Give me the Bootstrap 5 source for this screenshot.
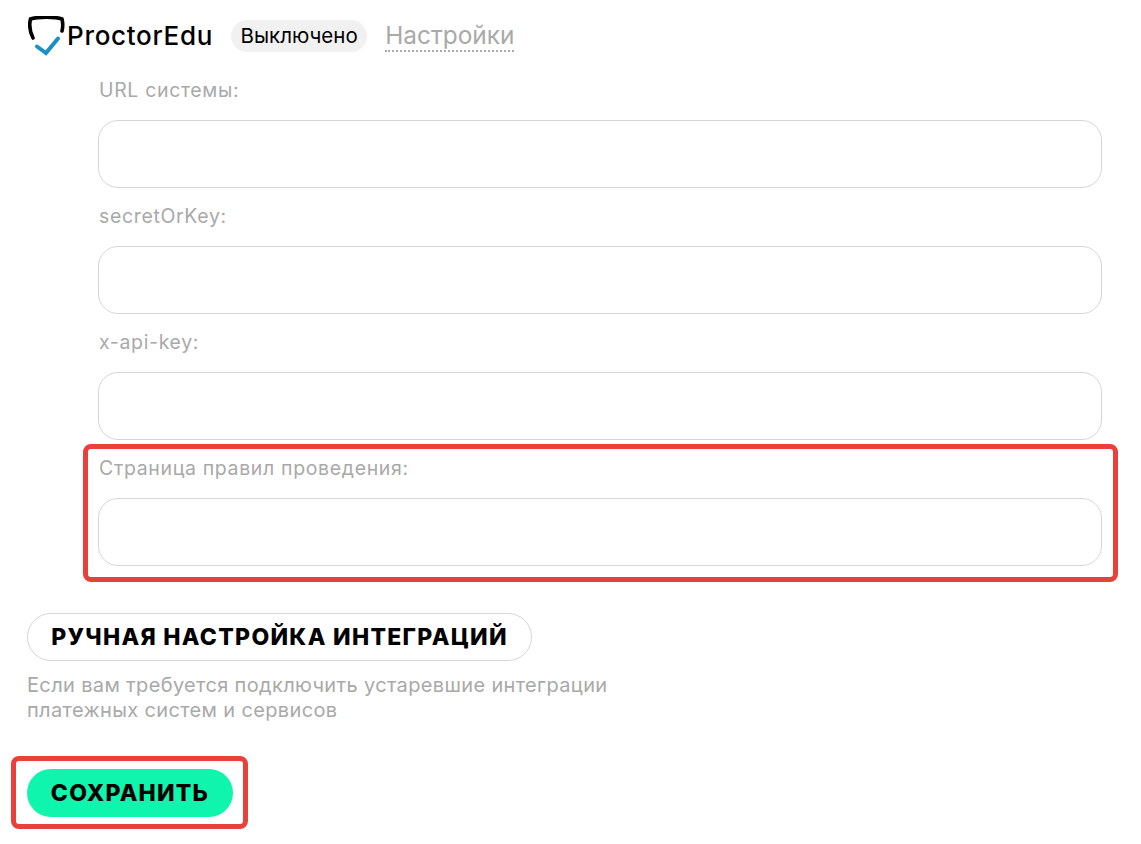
<!DOCTYPE html>
<html lang="ru">
<head>
<meta charset="utf-8">
<title>ProctorEdu</title>
<link href="https://cdn.jsdelivr.net/npm/bootstrap@5.3.0/dist/css/bootstrap.min.css" rel="stylesheet">
<style>
html,body{background:#fff;}
body{font-family:Inter,"Open Sans",sans-serif;color:#000;overflow:hidden;height:844px;}
.page-wrap{padding:19px 0 0 27px;width:1141px;position:relative;height:844px;}
.head-row{height:33px;}
.logo-mark{width:38px;height:40px;margin:0 1px 0 1px;flex:none;}
.logo-text{font-size:26px;font-weight:500;letter-spacing:.7px;line-height:1;}
.state-pill{background:#f1f1f1;border-radius:16px;font-size:20.5px;line-height:32px;height:32px;padding:0 9.5px;margin-left:18px;color:#000;}
.set-link{font-size:24.4px;color:#a9a9a9;line-height:30px;margin-left:18px;border-bottom:2px dotted #a9a9a9;text-decoration:none;display:block;}
.field-stack{margin:0 0 0 71px;width:1004px;padding-top:22px;}
.field-item{height:126px;}
.field-label{display:block;font-size:19.5px;letter-spacing:.65px;color:#a9a9a9;line-height:32px;height:32px;margin:0 0 14px 1px;}
.field-input.form-control{height:68px;border:1px solid #d6d6d6;border-radius:20px;box-shadow:none;background:#fff;}
.manual-btn.btn{margin-top:35px;height:48px;width:505px;border:1px solid #d6d6d6;border-radius:24px;background:#fff;color:#000;font-size:23px;font-weight:800;letter-spacing:1.3px;padding:0;line-height:46px;display:block;white-space:nowrap;}
.help-note{font-size:20px;letter-spacing:.35px;line-height:25px;color:#a9a9a9;margin:12px 0 0 0;width:620px;}
.save-btn.btn{margin-top:46px;width:206px;height:48px;border:0;border-radius:24px;background:#0ff5ae;color:#000;font-size:23px;font-weight:800;letter-spacing:1.2px;padding:0;display:block;}
.mark-box{position:absolute;border:5px solid #e8403a;border-radius:8px;pointer-events:none;}
.mark-a{left:83px;top:444px;width:1035px;height:138px;}
.mark-b{left:11px;top:756px;width:237px;height:73px;}
</style>
</head>
<body>
<div class="page-wrap">
  <div class="head-row d-flex align-items-center">
    <svg class="logo-mark" viewBox="28 15 38 40" fill="none" stroke-linecap="round" aria-hidden="true">
      <path d="M33 37C29.5 30 29 24 30.5 18C38 15.5 55 15.5 62 18C63 22 63 26 62 30" stroke="#000" stroke-width="3.6"/>
      <path d="M37 45.5L46 52L58 37.5" stroke="#1a8fc4" stroke-width="4"/>
    </svg>
    <span class="logo-text">ProctorEdu</span>
    <span class="state-pill">Выключено</span>
    <a class="set-link" href="#">Настройки</a>
  </div>
  <form>
    <div class="field-stack">
      <div class="field-item"><label class="field-label">URL системы:</label><input class="form-control field-input" type="text"></div>
      <div class="field-item"><label class="field-label">secretOrKey:</label><input class="form-control field-input" type="text"></div>
      <div class="field-item"><label class="field-label">x-api-key:</label><input class="form-control field-input" type="text"></div>
      <div class="field-item"><label class="field-label">Страница правил проведения:</label><input class="form-control field-input" type="text"></div>
    </div>
    <button type="button" class="btn manual-btn">РУЧНАЯ НАСТРОЙКА ИНТЕГРАЦИЙ</button>
    <p class="help-note">Если вам требуется подключить устаревшие интеграции<br>платежных систем и сервисов</p>
    <button type="button" class="btn save-btn">СОХРАНИТЬ</button>
  </form>
  <div class="mark-box mark-a"></div>
  <div class="mark-box mark-b"></div>
</div>
<script src="https://cdn.jsdelivr.net/npm/bootstrap@5.3.0/dist/js/bootstrap.bundle.min.js"></script>
</body>
</html>
